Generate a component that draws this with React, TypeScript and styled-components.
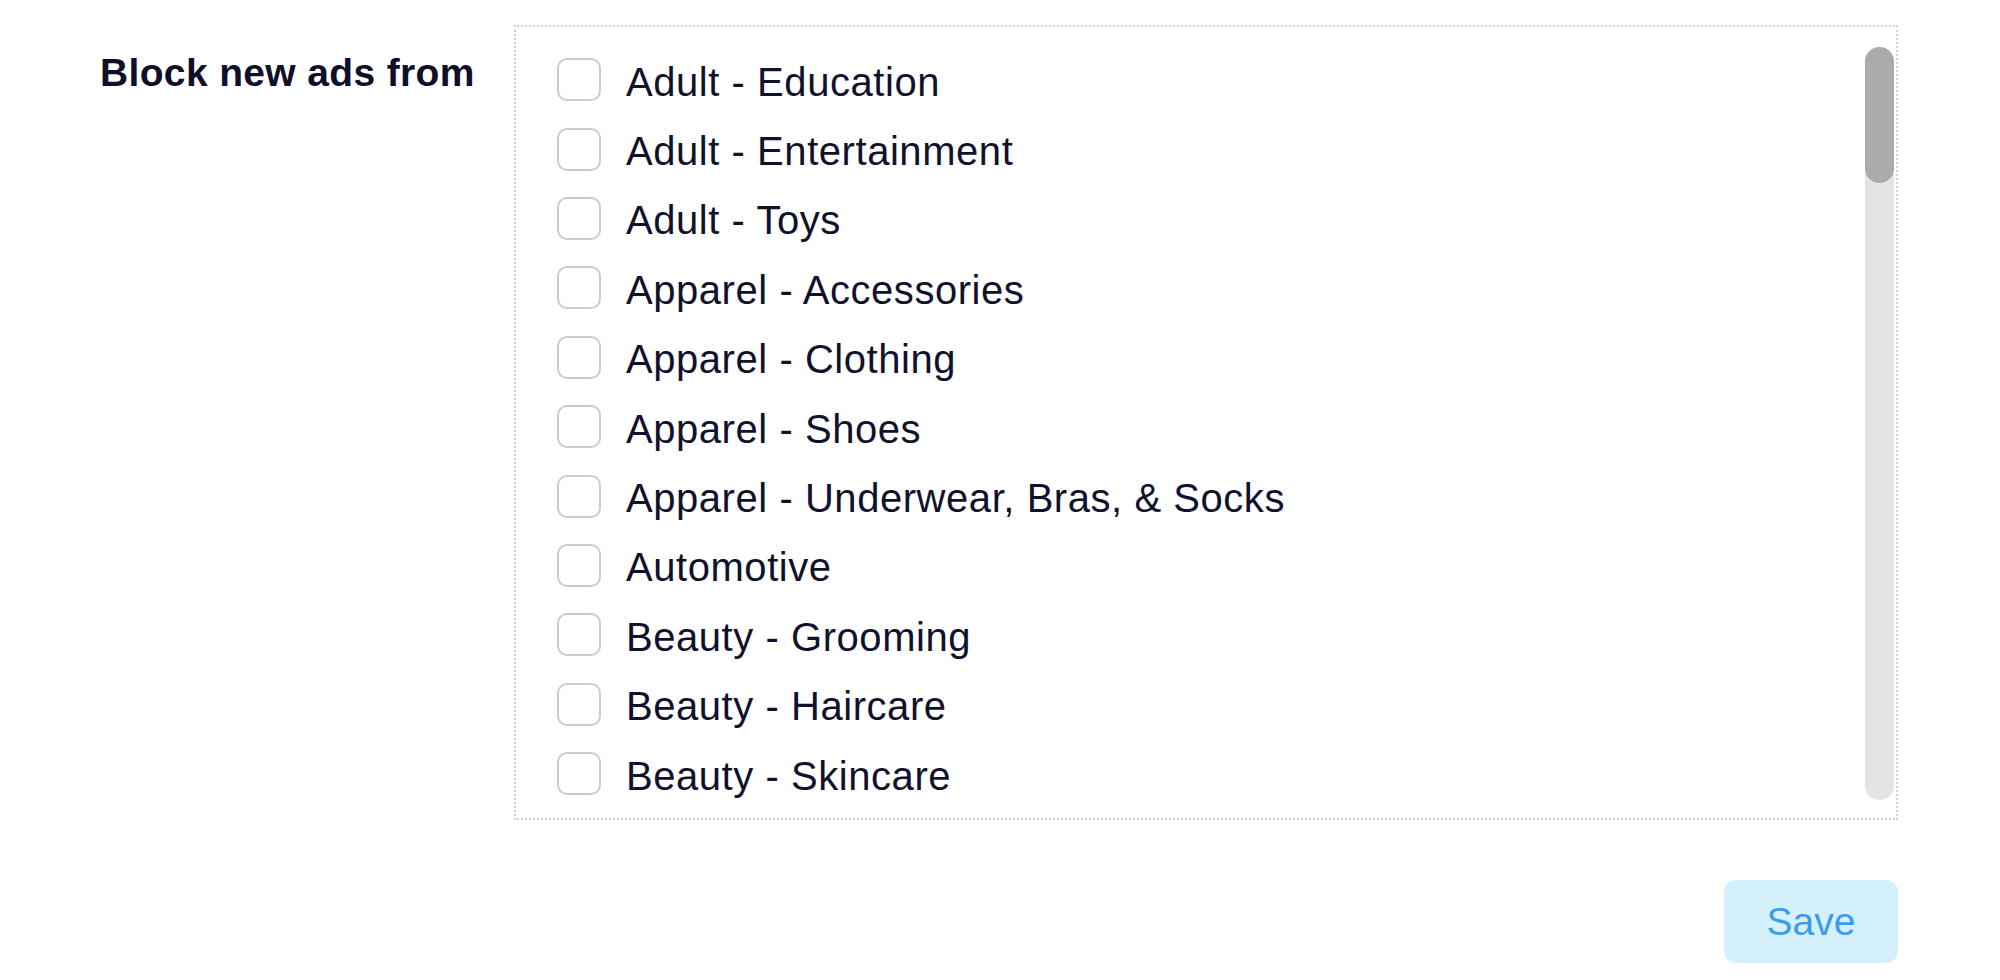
import React from 'react';
import styled, { createGlobalStyle } from 'styled-components';

const GlobalStyle = createGlobalStyle`
  html, body {
    margin: 0;
    padding: 0;
    background: #ffffff;
  }
  body {
    font-family: "Liberation Sans", Arial, Helvetica, sans-serif;
    color: #11112c;
  }
`;

const categories = [
  'Adult - Education',
  'Adult - Entertainment',
  'Adult - Toys',
  'Apparel - Accessories',
  'Apparel - Clothing',
  'Apparel - Shoes',
  'Apparel - Underwear, Bras, & Socks',
  'Automotive',
  'Beauty - Grooming',
  'Beauty - Haircare',
  'Beauty - Skincare',
];

const Page = styled.div`
  width: 2000px;
  padding: 25px 0 0 100px;
  box-sizing: border-box;
  display: flex;
  flex-direction: column;
  align-items: flex-start;
`;

const FormRow = styled.div`
  display: flex;
  align-items: flex-start;
`;

const FieldLabel = styled.div`
  width: 414px;
  padding-top: 26px;
  font-size: 39px;
  font-weight: 700;
  letter-spacing: 0.35px;
  color: #0f0f2a;
  line-height: 1.15;
  white-space: nowrap;
`;

const ListBox = styled.div`
  width: 1384px;
  height: 795px;
  box-sizing: border-box;
  border: 2px dotted #cfcfcf;
  display: flex;
  overflow: hidden;
`;

const OptionList = styled.div`
  flex: 1;
  padding: 18px 0 0 41px;
  display: flex;
  flex-direction: column;
`;

const OptionRow = styled.label`
  height: 69.4px;
  flex-shrink: 0;
  display: flex;
  align-items: center;
  gap: 25px;
  cursor: pointer;
`;

const CheckBox = styled.span`
  width: 44px;
  height: 43px;
  box-sizing: border-box;
  border: 2px solid #cbcbcb;
  border-radius: 10px;
  background: #ffffff;
  flex-shrink: 0;
`;

const OptionText = styled.span`
  font-size: 40px;
  letter-spacing: 0.55px;
  line-height: 1.15;
  padding-top: 4px;
  color: #11112c;
  white-space: nowrap;
`;

const ScrollRail = styled.div`
  width: 29px;
  margin: 20px 2px 18px 0;
  border-radius: 15px;
  background: #e4e4e4;
  display: flex;
  flex-direction: column;
`;

const ScrollThumb = styled.div`
  height: 136px;
  border-radius: 15px;
  background: #ababab;
`;

const Actions = styled.div`
  width: 1798px;
  display: flex;
  justify-content: flex-end;
  padding-top: 60px;
`;

const SaveButton = styled.button`
  width: 174px;
  height: 83px;
  border: none;
  border-radius: 12px;
  background: #d4f1fb;
  color: #3b9ce9;
  font-family: "Liberation Sans", Arial, Helvetica, sans-serif;
  font-size: 39px;
  cursor: pointer;
`;

export default function App() {
  return (
    <>
      <GlobalStyle />
      <Page>
        <FormRow>
          <FieldLabel>Block new ads from</FieldLabel>
          <ListBox>
            <OptionList>
              {categories.map((c) => (
                <OptionRow key={c}>
                  <CheckBox />
                  <OptionText>{c}</OptionText>
                </OptionRow>
              ))}
            </OptionList>
            <ScrollRail>
              <ScrollThumb />
            </ScrollRail>
          </ListBox>
        </FormRow>
        <Actions>
          <SaveButton>Save</SaveButton>
        </Actions>
      </Page>
    </>
  );
}
